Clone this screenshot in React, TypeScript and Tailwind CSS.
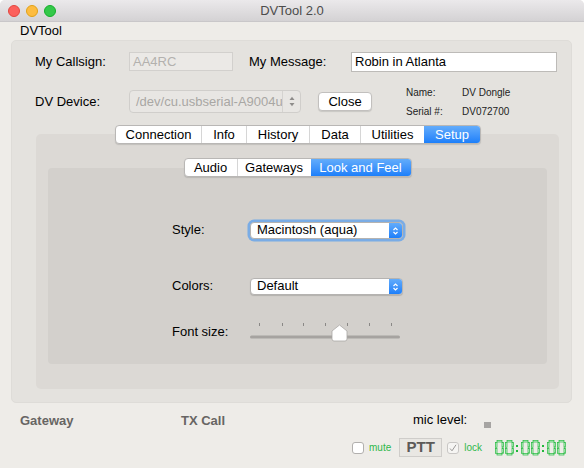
import React from "react";

const mainTabs = [
  { label: "Connection", w: "w-[85px]" },
  { label: "Info", w: "w-[45px]" },
  { label: "History", w: "w-[63px]" },
  { label: "Data", w: "w-[51px]" },
  { label: "Utilities", w: "w-[64px]" },
  { label: "Setup", w: "w-[56px]", active: true },
];

const subTabs = [
  { label: "Audio", w: "w-[52px]" },
  { label: "Gateways", w: "w-[74px]" },
  { label: "Look and Feel", w: "w-[100px]", active: true },
];

type Tab = { label: string; w: string; active?: boolean };

const Segmented: React.FC<{ tabs: Tab[]; className?: string }> = ({ tabs, className }) => (
  <div
    className={`relative z-10 flex h-[19px] overflow-hidden rounded-[4px] border border-[#b9b7b5] bg-white shadow-[0_1px_1px_rgba(0,0,0,0.12)] ${className ?? ""}`}
  >
    {tabs.map((t, i) => (
      <div
        key={t.label}
        className={`${t.w} flex items-center justify-center text-[13px] leading-none ${
          t.active
            ? "bg-gradient-to-b from-[#62acfb] to-[#1b7ffa] text-white"
            : "text-black"
        } ${i > 0 && !t.active ? "border-l border-[#d6d6d6]" : ""}`}
      >
        {t.label}
      </div>
    ))}
  </div>
);

const Chevrons = () => (
  <svg width="7" height="10" viewBox="0 0 7 10" fill="none" stroke="white" strokeWidth="1.2">
    <path d="M1.5 4 L3.5 2 L5.5 4" />
    <path d="M1.5 6 L3.5 8 L5.5 6" />
  </svg>
);

const PopUp: React.FC<{ value: string; focused?: boolean }> = ({ value, focused }) => (
  <div
    className={`flex h-[17px] w-[153px] overflow-hidden rounded-[4px] border border-[#b5b3b1] bg-white ${
      focused ? "shadow-[0_0_0_2.5px_rgba(92,160,238,0.75)]" : "shadow-[0_1px_1px_rgba(0,0,0,0.15)]"
    }`}
  >
    <div className="flex-1 pl-[6px] text-[13px] leading-[14px] text-black">{value}</div>
    <div className="flex w-[13px] items-center justify-center bg-gradient-to-b from-[#62acfb] to-[#1b7ffa]">
      <Chevrons />
    </div>
  </div>
);

const Slider = () => {
  const ticks = [9, 32, 53, 75, 97, 119, 141];
  return (
    <svg width="152" height="22" viewBox="0 0 152 22">
      {ticks.map((x) => (
        <rect key={x} x={x} y={2} width={1} height={3} fill="#8a8886" />
      ))}
      <rect x={0} y={14.5} width={150} height={3} rx={1.5} fill="#a6a3a0" />
      <path
        d="M82 10 L89.5 4 L97 10 V18 Q97 20 95 20 H84 Q82 20 82 18 Z"
        fill="white"
        stroke="#a9a7a5"
        strokeWidth="0.8"
      />
    </svg>
  );
};

// green segment clock, every digit is a zero
const SevenSeg = () => {
  const digits = [0, 10, 26, 36, 52, 62];
  const colons = [21, 47];
  const seg = { fill: "#d3f3d7", stroke: "#22b83c", strokeWidth: 0.7 };
  return (
    <svg width="72" height="16" viewBox="0 0 72 16">
      {digits.map((d) => (
        <g key={d}>
          <rect x={d + 2} y={0.5} width={5} height={1.5} {...seg} />
          <rect x={d + 2} y={13.5} width={5} height={1.5} {...seg} />
          <rect x={d + 0.5} y={2.5} width={1.5} height={4.8} {...seg} />
          <rect x={d + 0.5} y={8.5} width={1.5} height={4.8} {...seg} />
          <rect x={d + 7} y={2.5} width={1.5} height={4.8} {...seg} />
          <rect x={d + 7} y={8.5} width={1.5} height={4.8} {...seg} />
        </g>
      ))}
      {colons.map((c) => (
        <g key={c}>
          <rect x={c} y={5} width={2} height={2} fill="#22b83c" />
          <rect x={c} y={10} width={2} height={2} fill="#22b83c" />
        </g>
      ))}
    </svg>
  );
};

const App: React.FC = () => {
  return (
    <div className="h-[468px] w-[584px] overflow-hidden rounded-t-[5px] bg-[#eeece8] font-['Liberation_Sans',Arial,sans-serif] text-black">
      {/* title bar */}
      <div className="flex h-[22px] items-center border-b border-[#c9c7c9] bg-gradient-to-b from-[#ebe9eb] to-[#d4d2d4]">
        <div className="flex w-[70px] gap-[6px] pl-[8px]">
          <span className="h-[12px] w-[12px] rounded-full border border-[#e2463f] bg-[#fc605c]" />
          <span className="h-[12px] w-[12px] rounded-full border border-[#e1a116] bg-[#fdbc40]" />
          <span className="h-[12px] w-[12px] rounded-full border border-[#14ae2b] bg-[#34c84a]" />
        </div>
        <div className="flex-1 text-center text-[13px] text-[#4c4c4c]">DVTool 2.0</div>
        <div className="w-[70px]" />
      </div>

      <div className="h-[18px] pl-[20px] text-[13px] leading-[18px]">DVTool</div>

      {/* group box */}
      <div className="ml-[11px] flex h-[363px] w-[561px] flex-col rounded-[5px] border border-[#dedcd8] bg-[#e4e2de]">
        <div className="mt-[11px] flex h-[19px] items-center text-[13px]">
          <span className="w-[117px] pl-[23px]">My Callsign:</span>
          <div className="h-[19px] w-[104px] border border-[#d2d0cd] bg-[#ebe9e6] pl-[3px] text-[13px] leading-[17px] text-[#b3b1ae]">
            AA4RC
          </div>
          <span className="ml-[16px] w-[102px]">My Message:</span>
          <div className="h-[20px] w-[206px] border border-[#bdbbb8] bg-white pl-[3px] text-[13px] leading-[18px]">
            Robin in Atlanta
          </div>
        </div>

        <div className="mt-[19px] flex h-[23px] items-center text-[13px]">
          <span className="w-[117px] pl-[23px]">DV Device:</span>
          <div className="flex h-[23px] w-[172px] rounded-[4px] border border-[#d0cecb] bg-[#e8e6e3]">
            <div className="flex-1 overflow-hidden whitespace-nowrap pl-[6px] leading-[21px] text-[#a9a7a4]">
              /dev/cu.usbserial-A9004u
            </div>
            <div className="flex w-[18px] items-center justify-center border-l border-[#d5d3d0]">
              <svg width="6" height="11" viewBox="0 0 6 11" fill="#8e8c8a">
                <path d="M0.5 4 L3 0.8 L5.5 4 Z" />
                <path d="M0.5 7 L3 10.2 L5.5 7 Z" />
              </svg>
            </div>
          </div>
          <div className="ml-[17px] flex h-[19px] w-[54px] items-center justify-center rounded-[4px] border border-[#c2c0be] bg-white shadow-[0_1px_1px_rgba(0,0,0,0.12)]">
            Close
          </div>
          <div className="ml-[34px] text-[10px] leading-[19px] text-[#222]">
            <div className="flex">
              <span className="w-[56px]">Name:</span>
              <span>DV Dongle</span>
            </div>
            <div className="flex">
              <span className="w-[56px]">Serial #:</span>
              <span>DV072700</span>
            </div>
          </div>
        </div>

        {/* main tabs */}
        <div className="mt-[12px] flex">
          <Segmented tabs={mainTabs} className="ml-[103px]" />
        </div>
        <div className="-mt-[10px] ml-[24px] flex h-[255px] w-[523px] flex-col rounded-[5px] bg-[#dcd9d5] pt-[24px]">
          <div className="flex">
            <Segmented tabs={subTabs} className="mx-auto" />
          </div>
          <div className="-mt-[9px] ml-[12px] flex h-[196px] w-[499px] flex-col rounded-[4px] bg-[#d3d0cc] text-[13px]">
            <div className="mt-[54px] flex h-[17px] items-center">
              <span className="-mt-[1px] w-[202px] pl-[124px]">Style:</span>
              <PopUp value="Macintosh (aqua)" focused />
            </div>
            <div className="mt-[39px] flex h-[17px] items-center">
              <span className="-mt-[1px] w-[202px] pl-[124px]">Colors:</span>
              <PopUp value="Default" />
            </div>
            <div className="mt-[26px] flex h-[22px] items-center">
              <span className="w-[202px] pl-[124px]">Font size:</span>
              <Slider />
            </div>
          </div>
        </div>
      </div>

      {/* status area */}
      <div className="mt-[10px] flex h-[16px] items-center text-[13px] leading-[16px]">
        <span className="w-[181px] shrink-0 pl-[20px] font-bold text-[#676563]">Gateway</span>
        <span className="w-[232px] shrink-0 font-bold text-[#676563]">TX Call</span>
        <span className="-mt-[3px]">mic level:</span>
        <span className="ml-[17px] mt-[7px] h-[6px] w-[7px] bg-[#a6a4a2]" />
      </div>
      <div className="mt-[9px] flex h-[19px] items-center pl-[352px]">
        <span className="h-[12px] w-[12px] rounded-[3px] border border-[#b2b0ae] bg-white" />
        <span className="ml-[5px] text-[10px] text-[#2fb84a]">mute</span>
        <div className="ml-[8px] flex h-[19px] w-[43px] items-center justify-center border border-[#cfcdca] bg-[#e9e7e3] text-[15px] font-bold text-[#5c5a58]">
          PTT
        </div>
        <span className="ml-[5px] flex h-[12px] w-[12px] items-center justify-center rounded-[3px] border border-[#c9c7c5] bg-[#f6f5f3]">
          <svg width="8" height="8" viewBox="0 0 8 8" fill="none" stroke="#9b9997" strokeWidth="1">
            <path d="M1 4.5 L3 6.8 L7 0.8" />
          </svg>
        </span>
        <span className="ml-[5px] text-[10px] text-[#2fb84a]">lock</span>
        <div className="ml-[13px]">
          <SevenSeg />
        </div>
      </div>
    </div>
  );
};

export default App;
